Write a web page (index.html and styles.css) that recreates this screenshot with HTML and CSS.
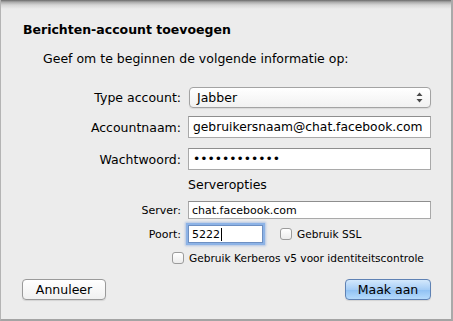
FILE: index.html
```html
<!DOCTYPE html>
<html lang="nl">
<head>
	<meta charset="UTF-8">
	<title>Berichten-account toevoegen</title>
	<link rel="stylesheet" href="styles.css">
</head>
<body>
	<div class="sheet">
		<h1 class="title">Berichten-account toevoegen</h1>
		<p class="intro">Geef om te beginnen de volgende informatie op:</p>

		<div class="row row-type">
			<label>Type account:</label>
			<div class="select">
				<span>Jabber</span>
				<span class="arrows">
					<svg width="7" height="11" viewBox="0 0 7 11"><path d="M3.5 0.5 L6.5 4 H0.5 Z M3.5 10.5 L6.5 7 H0.5 Z" fill="#4a4a4a"/></svg>
				</span>
			</div>
		</div>
		<div class="row row-name">
			<label>Accountnaam:</label>
			<input type="text" class="field" value="gebruikersnaam@chat.facebook.com">
		</div>
		<div class="row row-pass">
			<label>Wachtwoord:</label>
			<input type="password" class="field" value="abcdefghijkl">
		</div>

		<div class="server">
			<div class="row small row-head">
				<span></span>
				<span class="head">Serveropties</span>
			</div>
			<div class="row small row-server">
				<label>Server:</label>
				<input type="text" class="field small-field" value="chat.facebook.com">
			</div>
			<div class="row small row-port">
				<label>Poort:</label>
				<div class="port-line">
					<div class="field small-field port focus">5222<span class="caret"></span></div>
					<label class="check"><span class="box"></span>Gebruik SSL</label>
				</div>
			</div>
			<div class="kerberos">
				<label class="check"><span class="box"></span>Gebruik Kerberos v5 voor identiteitscontrole</label>
			</div>
		</div>

		<div class="buttons">
			<a href="javascript:void(0);" class="btn">Annuleer</a>
			<a href="javascript:void(0);" class="btn btn-default">Maak aan</a>
		</div>
	</div>
</body>
</html>
```

FILE: styles.css
```css
body{
	margin: 0;
	font-family: 'DejaVu Sans', 'Liberation Sans', sans-serif;
	color: #000;
}
.sheet{
	box-sizing: border-box;
	width: 453px;
	height: 321px;
	padding: 22px 20px 0 21px;
	background: #ececec linear-gradient(#6a6a6a 0, #a9a9a9 2px, #d6d6d6 5px, #ececec 9px) no-repeat;
	background-size: 100% 10px;
	border-left: 1px solid #b4b4b4;
	border-right: 2px solid #a9a9a9;
	border-bottom: 2px solid #a4a4a4;
}
.title{
	margin: 0;
	padding-left: 1px;
	font-size: 12.5px;
	line-height: 16px;
	font-weight: bold;
}
.intro{
	margin: 13px 0 0 21px;
	font-size: 12.5px;
	line-height: 16px;
}
.row{
	display: grid;
	grid-template-columns: 159px 1fr;
	column-gap: 7px;
	align-items: center;
	font-size: 12.5px;
}
.row > label{
	text-align: right;
}
.row-type{
	margin-top: 20px;
}
.row-name{
	margin-top: 8px;
}
.row-pass{
	margin-top: 10px;
}
.select{
	display: flex;
	align-items: center;
	justify-content: space-between;
	box-sizing: border-box;
	height: 21px;
	margin-left: 1px;
	padding: 0 7px 0 7px;
	border: 1px solid #a3a3a3;
	border-radius: 4px;
	background: linear-gradient(#ffffff, #f1f1f1);
	box-shadow: 0 1px 1px rgba(0,0,0,0.08);
}
.arrows{
	display: flex;
}
.field{
	box-sizing: border-box;
	height: 22px;
	width: 100%;
	margin: 0;
	padding: 0 4px;
	border: 1px solid #a9a9a9;
	border-top-color: #8e8e8e;
	background: #fff;
	font-family: inherit;
	font-size: 12.3px;
	color: #000;
	outline: none;
}
.server{
	margin-top: 8px;
}
.small{
	font-size: 11px;
}
.head{
	font-size: 12.5px;
	line-height: 14px;
}
.row-server{
	margin-top: 9px;
}
.row-port{
	margin-top: 6px;
}
.small-field{
	height: 18px;
	font-size: 11px;
	padding: 0 3px;
}
.port-line{
	display: flex;
	align-items: center;
}
.port{
	display: flex;
	align-items: center;
	width: 75px;
	flex: none;
}
.focus{
	border-color: #6d8fc2;
	box-shadow: 0 0 0 2px #8db3e6, 0 0 2px 3px rgba(120,160,220,0.5);
}
.caret{
	display: inline-block;
	width: 1px;
	height: 13px;
	margin-left: 1px;
	background: #000;
}
.check{
	display: flex;
	align-items: center;
	font-size: 10.6px;
	white-space: nowrap;
}
.port-line .check{
	margin-left: 17px;
}
.box{
	box-sizing: border-box;
	width: 12px;
	height: 12px;
	margin-right: 5px;
	border: 1px solid #9b9b9b;
	border-radius: 3px;
	background: linear-gradient(#ffffff, #ececec);
}
.kerberos{
	margin: 7px 0 0 150px;
	line-height: 16px;
}
.buttons{
	display: flex;
	justify-content: space-between;
	margin-top: 13px;
}
.btn{
	display: block;
	box-sizing: border-box;
	height: 21px;
	line-height: 19px;
	width: 84px;
	border: 1px solid #9a9a9a;
	border-radius: 4px;
	background: linear-gradient(#ffffff, #f0f0f0);
	box-shadow: 0 1px 1px rgba(0,0,0,0.1);
	color: #000;
	text-align: center;
	font-size: 12.5px;
	text-decoration: none;
}
.btn-default{
	width: 86px;
	border-color: #5f82b4;
	background: linear-gradient(#d3e8fc, #a6cdf6 50%, #8ec0f3 51%, #b6dbfc);
}
```
